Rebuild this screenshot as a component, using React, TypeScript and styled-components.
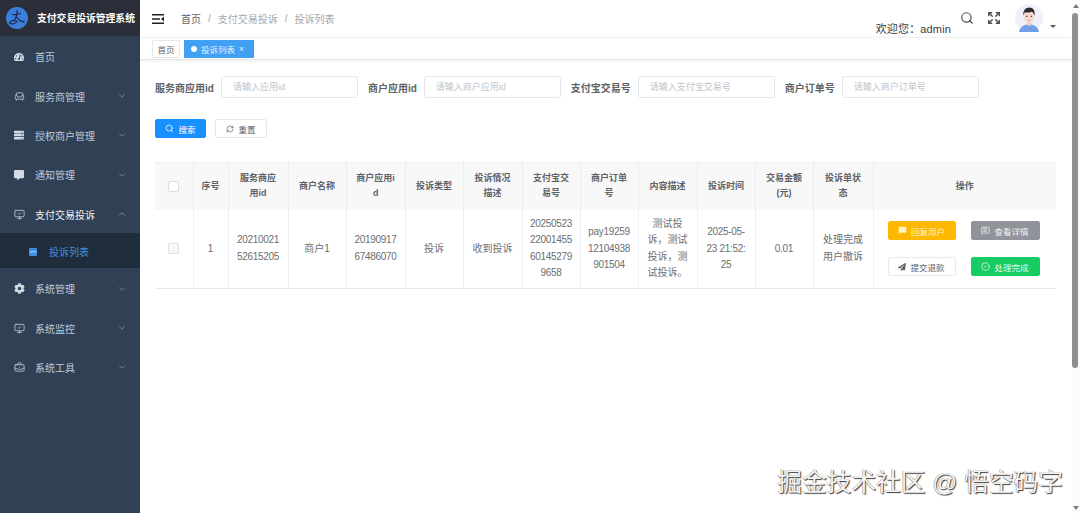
import styled, { createGlobalStyle } from "styled-components";
import {
  Armchair,
  BriefcaseBusiness,
  ChevronDown,
  ChevronUp,
  CircleCheck,
  Expand,
  MessageSquareText,
  MonitorCheck,
  RefreshCw,
  Search,
} from "lucide-react";
import { FaCog, FaCommentAlt, FaPaperPlane, FaServer, FaTachometerAlt } from "react-icons/fa";
import { MdChatBubble } from "react-icons/md";

const fontStack = `"Liberation Sans", "Noto Sans CJK SC", sans-serif`;

const GlobalStyle = createGlobalStyle`
  html, body {
    margin: 0;
    height: 513px;
    overflow: hidden;
    background: #fff;
    font-family: ${fontStack};
  }
  * { box-sizing: border-box; }
`;

const Page = styled.div`
  display: flex;
  width: 1080px;
  height: 513px;
  position: relative;
  overflow: hidden;
`;

const Sidebar = styled.aside`
  width: 140px;
  flex: none;
  background: #304156;
`;

const LogoBar = styled.div`
  height: 36px;
  padding-left: 6px;
  display: flex;
  align-items: center;
  gap: 9px;
  background: #2b2f3a;
  color: #fff;
  font-size: 9.8px;
  font-weight: 700;
  white-space: nowrap;
`;

const MenuItem = styled.div<{ $active?: boolean }>`
  height: 39.4px;
  padding: 2px 13px 0 14px;
  display: flex;
  align-items: center;
  color: ${(p) => (p.$active ? "#f4f4f5" : "#bfcbd9")};
  font-size: 10px;
`;

const MenuIcon = styled.span`
  width: 21px;
  flex: none;
  display: flex;
  align-items: center;
  color: #d3dbe5;
`;

const MenuLabel = styled.span`
  flex: 1;
`;

const SubItem = styled.div`
  height: 35px;
  padding: 3px 0 0 29px;
  display: flex;
  align-items: center;
  gap: 12px;
  background: #1f2d3d;
  color: #3f8fe0;
  font-size: 10px;
`;

const Main = styled.main`
  flex: 1;
  min-width: 0;
  display: flex;
  flex-direction: column;
`;

const TopBar = styled.header`
  height: 37px;
  flex: none;
  padding-left: 12px;
  display: flex;
  align-items: center;
  color: #303133;
`;

const Crumbs = styled.div`
  margin-left: 17px;
  display: flex;
  align-items: center;
  gap: 7px;
  font-size: 10px;
  color: #606266;
`;

const CrumbMuted = styled.span`
  color: #a3a6ad;
`;

const TopRight = styled.div`
  margin-left: auto;
  display: flex;
  align-items: flex-start;
  height: 37px;
`;

const Welcome = styled.span`
  margin: 22px 9px 0 0;
  font-size: 11px;
  line-height: 14px;
  letter-spacing: 0.15px;
  color: #3a3d42;
  white-space: nowrap;
`;

const TopIcon = styled.span<{ $gap: number }>`
  margin: 11px ${(p) => p.$gap}px 0 0;
  display: flex;
  color: #4b4f55;
`;

const Avatar = styled.span`
  margin-top: 4px;
  display: flex;
`;

const Caret = styled.span`
  margin: 25px 16px 0 7px;
  width: 0;
  height: 0;
  border-left: 3px solid transparent;
  border-right: 3px solid transparent;
  border-top: 3px solid #55585d;
`;

const TagsBar = styled.div`
  height: 23px;
  flex: none;
  padding: 2px 0 0 12px;
  display: flex;
  gap: 4px;
  border-top: 1px solid #eff0f2;
  border-bottom: 1px solid #e4e5e8;
  box-shadow: 0 1px 3px rgba(0, 0, 0, 0.08);
`;

const Tag = styled.span<{ $active?: boolean }>`
  height: 18px;
  padding: ${(p) => (p.$active ? "0 9px 0 6px" : "0 4.5px")};
  display: flex;
  align-items: center;
  gap: 4px;
  font-size: 8.5px;
  color: ${(p) => (p.$active ? "#e8f3ff" : "#606266")};
  background: ${(p) => (p.$active ? "#42a0f4" : "#fff")};
  border: 1px solid ${(p) => (p.$active ? "#42a0f4" : "#e6e8ec")};
`;

const TagDot = styled.i`
  width: 6px;
  height: 6px;
  border-radius: 50%;
  background: #fff;
`;

const Content = styled.section`
  flex: 1;
  padding: 16px 16px 0 15px;
`;

const FilterRow = styled.div`
  height: 22px;
  display: flex;
  align-items: center;
`;

const FilterLabel = styled.label`
  margin-right: 7px;
  font-size: 10px;
  font-weight: 700;
  color: #5f6266;
  white-space: nowrap;
`;

const FilterInput = styled.input`
  width: 137px;
  height: 22px;
  margin-right: 10px;
  padding: 0 11px;
  border: 1px solid #e4e7ed;
  border-radius: 3px;
  background: #fff;
  font-family: inherit;
  font-size: 9px;
  outline: none;

  &::placeholder {
    color: #c0c4cc;
  }
`;

const ActionRow = styled.div`
  margin: 21px 0 24px;
  display: flex;
  gap: 9px;
`;

const QueryButton = styled.button<{ $primary?: boolean }>`
  width: ${(p) => (p.$primary ? "51px" : "52px")};
  height: 19px;
  padding: 0;
  display: flex;
  align-items: center;
  justify-content: center;
  gap: 4px;
  border: 1px solid ${(p) => (p.$primary ? "#1890ff" : "#e6e8ec")};
  border-radius: 2px;
  background: ${(p) => (p.$primary ? "#1890ff" : "#fff")};
  color: ${(p) => (p.$primary ? "#fff" : "#606266")};
  font-family: inherit;
  font-size: 8.5px;
`;

const Table = styled.table`
  width: 901px;
  table-layout: fixed;
  border-collapse: collapse;
  border-top: 1px solid #edeff2;
  border-bottom: 1px solid #e6e8ec;
`;

const HeadCell = styled.th`
  height: 47px;
  padding: 0 4px;
  background: #f8f8f9;
  border-right: 1px solid #eaecef;
  font-size: 9px;
  line-height: 15.5px;
  font-weight: 700;
  color: #5f6368;
  text-align: center;

  &:last-child {
    border-right: 0;
  }
`;

const BodyCell = styled.td`
  height: 79px;
  padding: 0 2px;
  border-right: 1px solid #eef0f3;
  font-size: 10px;
  line-height: 16.4px;
  color: #6b6e73;
  text-align: center;

  &:last-child {
    border-right: 0;
  }
`;

const Digits = styled.span`
  letter-spacing: -0.3px;
`;

const Checkbox = styled.span<{ $disabled?: boolean }>`
  display: inline-block;
  width: 11px;
  height: 11px;
  vertical-align: middle;
  border: 1px solid #dcdfe6;
  border-radius: 2px;
  background: ${(p) => (p.$disabled ? "#f7f8fa" : "#fff")};
`;

const OperationGrid = styled.div`
  padding-left: 12px;
  display: grid;
  grid-template-columns: 68px 69px;
  grid-auto-rows: 19px;
  column-gap: 15px;
  row-gap: 17px;
`;

const buttonTones = {
  warning: { bg: "#ffb800", line: "#ffb800", text: "#fff3d0" },
  gray: { bg: "#909399", line: "#909399", text: "#f1f1f2" },
  plain: { bg: "#fff", line: "#e8eaed", text: "#606266" },
  success: { bg: "#17cc62", line: "#17cc62", text: "#e4fbee" },
};

const OperationButton = styled.button<{ $tone: keyof typeof buttonTones }>`
  padding: 0;
  display: flex;
  align-items: center;
  justify-content: center;
  gap: 4px;
  border: 1px solid ${(p) => buttonTones[p.$tone].line};
  border-radius: 2px;
  background: ${(p) => buttonTones[p.$tone].bg};
  color: ${(p) => buttonTones[p.$tone].text};
  font-family: inherit;
  font-size: 8.5px;
`;

const ScrollRail = styled.div`
  width: 8px;
  flex: none;
  display: flex;
  flex-direction: column;
  align-items: center;
  background: #fbfbfb;
`;

const ArrowUp = styled.i`
  margin-top: 4px;
  border-left: 3px solid transparent;
  border-right: 3px solid transparent;
  border-bottom: 4px solid #7c7c7c;
`;

const ScrollThumb = styled.div`
  width: 6px;
  height: 355px;
  margin: 5px 2px 0 0;
  border-radius: 3px;
  background: #8f8f8f;
`;

const ArrowDown = styled.i`
  margin-top: auto;
  margin-bottom: 3px;
  border-left: 3px solid transparent;
  border-right: 3px solid transparent;
  border-top: 4px solid #7c7c7c;
`;

const Watermark = styled.div`
  position: absolute;
  right: 17px;
  bottom: 15px;
  font-size: 24.7px;
  line-height: 30px;
  color: #f4f4f4;
  text-shadow: 1px 1px 1px #3c3c3c, -0.5px -0.5px 0.5px #8a8a8a;
  white-space: nowrap;
`;

function LogoMark() {
  return (
    <svg width="22" height="24" viewBox="0 0 22 24">
      <circle cx="11" cy="12" r="11" fill="#3b7fde" />
      <path d="M11.500 4 10.400 10c-.4 2-1.400 3.800-3 5" fill="none" stroke="#1f2a44" strokeWidth="1.300" />
      <path d="M6.500 8.500c3 .5 6 0 8.500-1.500M10.500 11c1.500 2.800 4.500 4.500 8 5" fill="none" stroke="#1f2a44" strokeWidth="1.300" />
      <path d="M3.500 17c2.500 1.800 6 .8 7.500-1.500-2.500-1.700-6-1.200-7.500 1.500Z" fill="none" stroke="#1f2a44" strokeWidth="1.100" />
    </svg>
  );
}

function Hamburger() {
  return (
    <svg width="12" height="10" viewBox="0 0 12 10">
      <path d="M0 .8h12M0 5h8M0 9.200h12" stroke="#1f2125" strokeWidth="1.500" />
      <path d="M12 2.600v4.800L9 5Z" fill="#1f2125" />
    </svg>
  );
}

function AvatarFace() {
  return (
    <svg width="28" height="28" viewBox="0 0 28 28">
      <circle cx="14" cy="14" r="14" fill="#eef1fa" />
      <path d="M4 28c.8-5 4.500-7.500 10-7.500S23.200 23 24 28Z" fill="#6f9fe8" />
      <rect x="11.800" y="16" width="4.400" height="6" rx="2" fill="#f6c9c4" />
      <ellipse cx="14" cy="12.500" rx="5.200" ry="6.500" fill="#fad6d0" />
      <path d="M8.500 12C7.600 6.500 10.500 3.500 14.500 3.500c3.500 0 5.800 2.800 5 8.500-.6-2.500-1.500-3.700-2.800-4.300-2.400 1-5.200 1-6.700.5-.8.800-1.200 2-1.500 3.800Z" fill="#2a2a2e" />
      <path d="M11 12.300h1.400M15.600 12.300H17" stroke="#2a2a2e" strokeWidth="1" />
      <path d="M12.800 16.200h2.400" stroke="#d98b85" strokeWidth=".8" />
    </svg>
  );
}

function ListGlyph() {
  return (
    <svg width="8" height="8" viewBox="0 0 8 8">
      <rect width="8" height="8" rx="1" fill="#3f8fe0" />
      <path d="M1 4.800 3 3l1.500 1.300L6 3l1 1.500" fill="none" stroke="#dcecff" strokeWidth=".8" />
    </svg>
  );
}

const menuIconProps = { size: 11, strokeWidth: 1.6 };

const menus = [
  { label: "首页", icon: <FaTachometerAlt size={10} /> },
  { label: "服务商管理", icon: <Armchair {...menuIconProps} />, arrow: true },
  { label: "授权商户管理", icon: <FaServer size={10} />, arrow: true },
  { label: "通知管理", icon: <FaCommentAlt size={10} />, arrow: true },
];

const lowerMenus = [
  { label: "系统管理", icon: <FaCog size={11} /> },
  { label: "系统监控", icon: <MonitorCheck {...menuIconProps} /> },
  { label: "系统工具", icon: <BriefcaseBusiness {...menuIconProps} /> },
];

const columnWidths = [38, 35, 60, 58, 59, 58, 59, 58, 58, 59, 58, 58, 60, 183];

const headers = [
  ["序号"],
  ["服务商应", "用id"],
  ["商户名称"],
  ["商户应用i", "d"],
  ["投诉类型"],
  ["投诉情况", "描述"],
  ["支付宝交", "易号"],
  ["商户订单", "号"],
  ["内容描述"],
  ["投诉时间"],
  ["交易金额", "(元)"],
  ["投诉单状", "态"],
  ["操作"],
];

const rowCells = [
  ["1"],
  ["20210021", "52615205"],
  ["商户1"],
  ["20190917", "67486070"],
  ["投诉"],
  ["收到投诉"],
  ["20250523", "22001455", "60145279", "9658"],
  ["pay19259", "12104938", "901504"],
  ["测试投", "诉，测试", "投诉，测", "试投诉。"],
  ["2025-05-", "23 21:52:", "25"],
  ["0.01"],
  ["处理完成", "用户撤诉"],
];

function Lines({ lines }: { lines: string[] }) {
  return (
    <>
      {lines.map((line, i) => (
        <span key={i}>
          {i > 0 && <br />}
          {/^[\x20-\x7e]+$/.test(line) ? <Digits>{line}</Digits> : line}
        </span>
      ))}
    </>
  );
}

export default function App() {
  return (
    <Page>
      <GlobalStyle />
      <Sidebar>
        <LogoBar>
          <LogoMark />
          支付交易投诉管理系统
        </LogoBar>
        <nav>
          {menus.map((m) => (
            <MenuItem key={m.label}>
              <MenuIcon>{m.icon}</MenuIcon>
              <MenuLabel>{m.label}</MenuLabel>
              {m.arrow && <ChevronDown size={10} color="#7f8ea1" />}
            </MenuItem>
          ))}
          <MenuItem $active>
            <MenuIcon>
              <MonitorCheck {...menuIconProps} />
            </MenuIcon>
            <MenuLabel>支付交易投诉</MenuLabel>
            <ChevronUp size={10} color="#7f8ea1" />
          </MenuItem>
          <SubItem>
            <ListGlyph />
            投诉列表
          </SubItem>
          {lowerMenus.map((m) => (
            <MenuItem key={m.label}>
              <MenuIcon>{m.icon}</MenuIcon>
              <MenuLabel>{m.label}</MenuLabel>
              <ChevronDown size={10} color="#7f8ea1" />
            </MenuItem>
          ))}
        </nav>
      </Sidebar>

      <Main>
        <TopBar>
          <Hamburger />
          <Crumbs>
            <span>首页</span>
            <CrumbMuted>/</CrumbMuted>
            <CrumbMuted>支付交易投诉</CrumbMuted>
            <CrumbMuted>/</CrumbMuted>
            <CrumbMuted>投诉列表</CrumbMuted>
          </Crumbs>
          <TopRight>
            <Welcome>欢迎您：admin</Welcome>
            <TopIcon $gap={13}>
              <Search size={14} strokeWidth={2} />
            </TopIcon>
            <TopIcon $gap={14}>
              <Expand size={14} strokeWidth={2.4} />
            </TopIcon>
            <Avatar>
              <AvatarFace />
            </Avatar>
            <Caret />
          </TopRight>
        </TopBar>

        <TagsBar>
          <Tag>首页</Tag>
          <Tag $active>
            <TagDot />
            投诉列表
            <span>×</span>
          </Tag>
        </TagsBar>

        <Content>
          <FilterRow>
            <FilterLabel>服务商应用id</FilterLabel>
            <FilterInput placeholder="请输入应用id" />
            <FilterLabel>商户应用id</FilterLabel>
            <FilterInput placeholder="请输入商户应用id" />
            <FilterLabel>支付宝交易号</FilterLabel>
            <FilterInput placeholder="请输入支付宝交易号" />
            <FilterLabel>商户订单号</FilterLabel>
            <FilterInput placeholder="请输入商户订单号" />
          </FilterRow>

          <ActionRow>
            <QueryButton $primary>
              <Search size={9} />
              搜索
            </QueryButton>
            <QueryButton>
              <RefreshCw size={8} />
              重置
            </QueryButton>
          </ActionRow>

          <Table>
            <colgroup>
              {columnWidths.map((w, i) => (
                <col key={i} width={w} />
              ))}
            </colgroup>
            <thead>
              <tr>
                <HeadCell>
                  <Checkbox />
                </HeadCell>
                {headers.map((lines, i) => (
                  <HeadCell key={i}>
                    <Lines lines={lines} />
                  </HeadCell>
                ))}
              </tr>
            </thead>
            <tbody>
              <tr>
                <BodyCell>
                  <Checkbox $disabled />
                </BodyCell>
                {rowCells.map((lines, i) => (
                  <BodyCell key={i}>
                    <Lines lines={lines} />
                  </BodyCell>
                ))}
                <BodyCell>
                  <OperationGrid>
                    <OperationButton $tone="warning">
                      <MdChatBubble size={9} />
                      回复用户
                    </OperationButton>
                    <OperationButton $tone="gray">
                      <MessageSquareText size={9} />
                      查看详情
                    </OperationButton>
                    <OperationButton $tone="plain">
                      <FaPaperPlane size={8} />
                      提交退款
                    </OperationButton>
                    <OperationButton $tone="success">
                      <CircleCheck size={9} />
                      处理完成
                    </OperationButton>
                  </OperationGrid>
                </BodyCell>
              </tr>
            </tbody>
          </Table>
        </Content>
      </Main>

      <ScrollRail>
        <ArrowUp />
        <ScrollThumb />
        <ArrowDown />
      </ScrollRail>

      <Watermark>掘金技术社区 @ 悟空码字</Watermark>
    </Page>
  );
}
